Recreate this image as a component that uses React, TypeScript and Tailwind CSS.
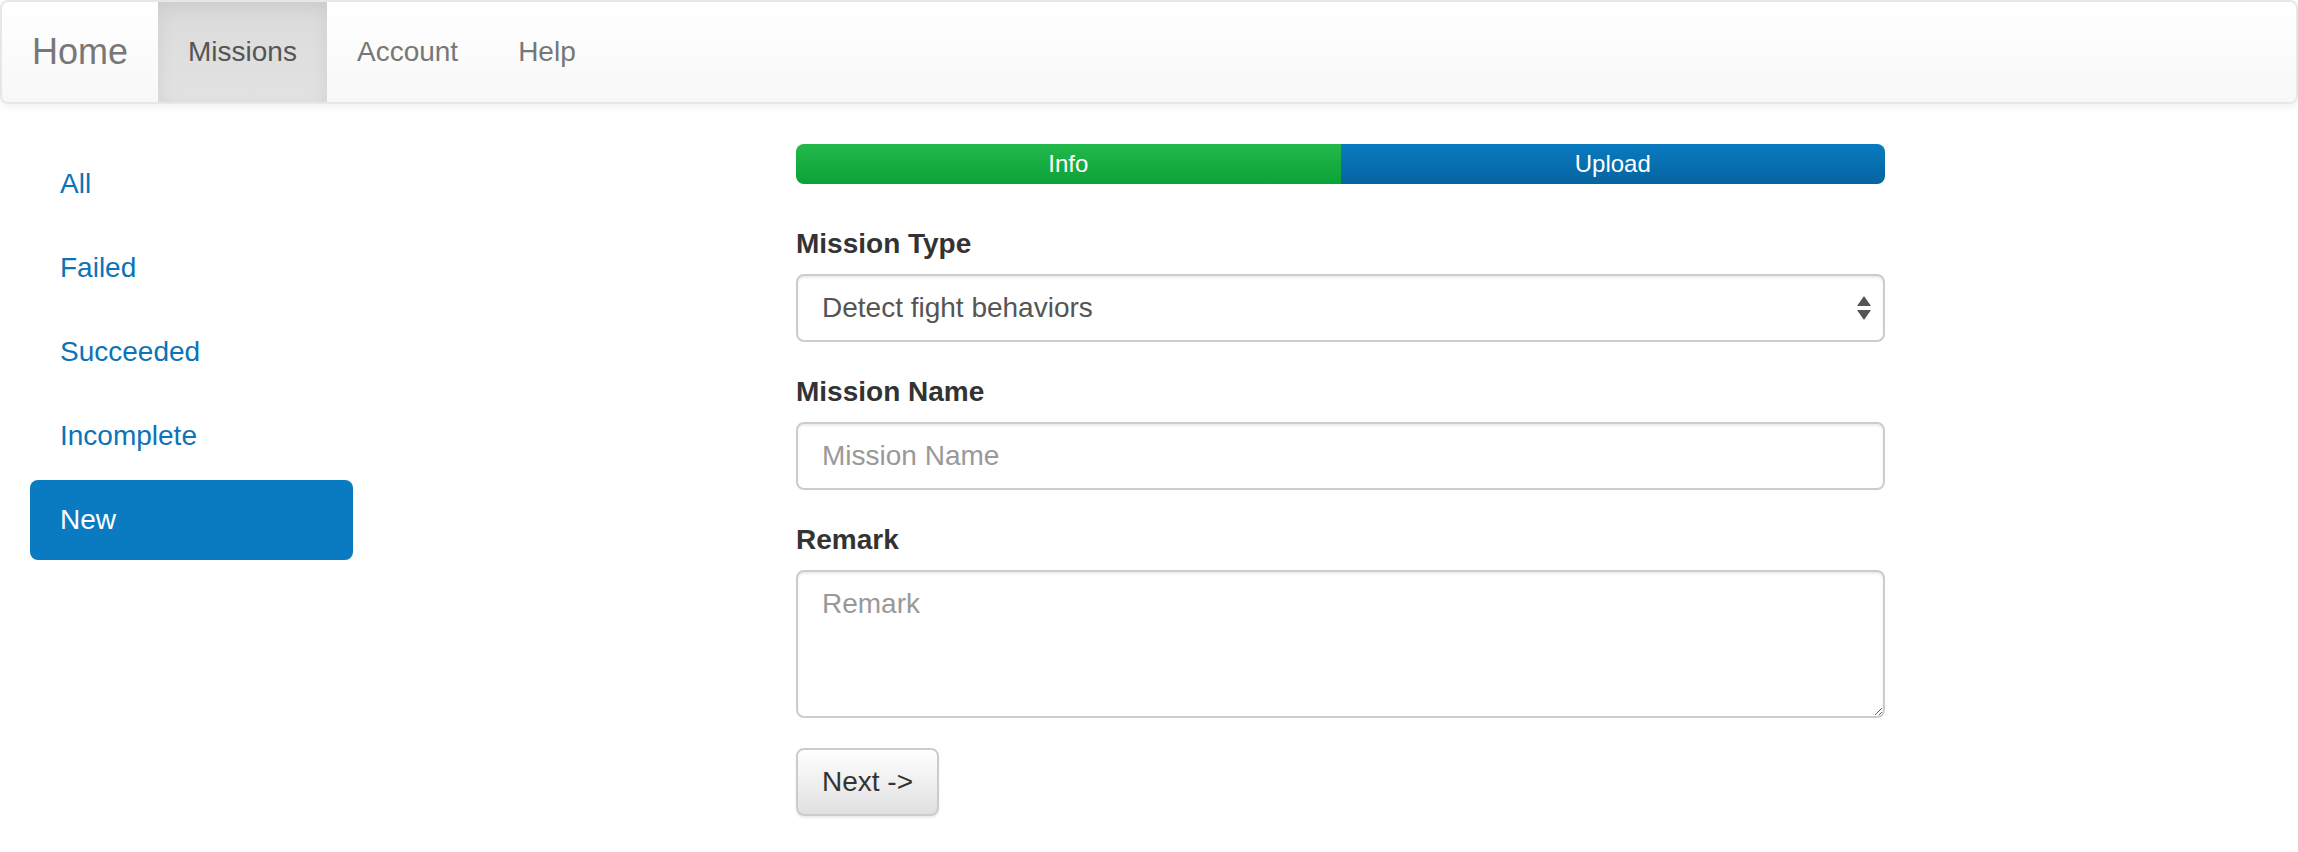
import React from "react";

const font = { fontFamily: '"Liberation Sans", Arial, sans-serif' };

const topLinks = [
  { label: "Missions", active: true },
  { label: "Account", active: false },
  { label: "Help", active: false },
];

const sideLinks = ["All", "Failed", "Succeeded", "Incomplete", "New"];

function Navbar() {
  return (
    <nav className="flex h-[104px] items-stretch rounded-[8px] border-2 border-[#e7e7e7] bg-gradient-to-b from-white to-[#f8f8f8] shadow-[0_2px_10px_rgba(0,0,0,0.075)]">
      <a className="flex items-center px-[30px] text-[36px] leading-[40px] text-[#777]">
        Home
      </a>
      <ul className="flex">
        {topLinks.map((l) => (
          <li key={l.label} className="flex">
            <a
              className={`flex items-center px-[30px] text-[28px] leading-[40px] ${
                l.active
                  ? "bg-gradient-to-b from-[#dbdbdb] to-[#e2e2e2] text-[#555] shadow-[inset_0_6px_18px_rgba(0,0,0,0.075)]"
                  : "text-[#777]"
              }`}
            >
              {l.label}
            </a>
          </li>
        ))}
      </ul>
    </nav>
  );
}

function Sidebar() {
  return (
    <ul className="col-span-2 flex flex-col gap-[4px] px-[30px]">
      {sideLinks.map((s) => {
        const active = s === "New";
        return (
          <li key={s}>
            <a
              className={`block rounded-[8px] px-[30px] py-[20px] text-[28px] leading-[40px] ${
                active ? "bg-[#0a7bc0] text-white" : "text-[#0b74b8]"
              }`}
            >
              {s}
            </a>
          </li>
        );
      })}
    </ul>
  );
}

function Field({ label, children }: { label: string; children: React.ReactNode }) {
  return (
    <div className="mb-[30px]">
      <label className="mb-[10px] block text-[28px] font-bold leading-[40px] text-[#333]">
        {label}
      </label>
      {children}
    </div>
  );
}

const control =
  "block w-full rounded-[8px] border-2 border-[#ccc] bg-white px-[24px] text-[28px] text-[#555] shadow-[inset_0_2px_2px_rgba(0,0,0,0.075)] outline-none placeholder:text-[#999]";

function MissionForm() {
  return (
    <div className="col-span-6 col-start-5 px-[30px]">
      <div className="mb-[40px] flex h-[40px] overflow-hidden rounded-[8px] bg-[#f5f5f5] text-[24px] leading-[40px] text-white">
        <div className="w-1/2 bg-gradient-to-b from-[#22b84a] to-[#0aa238] text-center">
          Info
        </div>
        <div className="w-1/2 bg-gradient-to-b from-[#0a7bc0] to-[#0564a0] text-center">
          Upload
        </div>
      </div>

      <Field label="Mission Type">
        <div className="relative">
          <select
            className={`${control} h-[68px] appearance-none`}
            style={font}
            defaultValue="fight"
          >
            <option value="fight">Detect fight behaviors</option>
          </select>
          <span className="pointer-events-none absolute right-[14px] top-1/2 flex -translate-y-1/2 flex-col items-center gap-[4px]">
            <svg width="14" height="10" viewBox="0 0 14 10">
              <path d="M7 0 L14 10 L0 10 Z" fill="#555" />
            </svg>
            <svg width="14" height="10" viewBox="0 0 14 10">
              <path d="M0 0 L14 0 L7 10 Z" fill="#555" />
            </svg>
          </span>
        </div>
      </Field>

      <Field label="Mission Name">
        <input className={`${control} h-[68px]`} style={font} placeholder="Mission Name" />
      </Field>

      <Field label="Remark">
        <textarea
          className={`${control} h-[148px] py-[12px] leading-[40px]`}
          style={font}
          rows={3}
          placeholder="Remark"
        />
      </Field>

      <button
        type="button"
        className="h-[68px] rounded-[8px] border-2 border-[#ccc] bg-gradient-to-b from-white to-[#e0e0e0] px-[24px] text-[28px] leading-[40px] text-[#333] shadow-[inset_0_2px_0_rgba(255,255,255,0.15),0_2px_2px_rgba(0,0,0,0.075)]"
        style={font}
      >
        Next -&gt;
      </button>
    </div>
  );
}

export default function App() {
  return (
    <div className="min-h-screen bg-white text-[#333]" style={font}>
      <Navbar />
      <div className="mt-[40px] grid grid-cols-12">
        <Sidebar />
        <MissionForm />
      </div>
    </div>
  );
}
